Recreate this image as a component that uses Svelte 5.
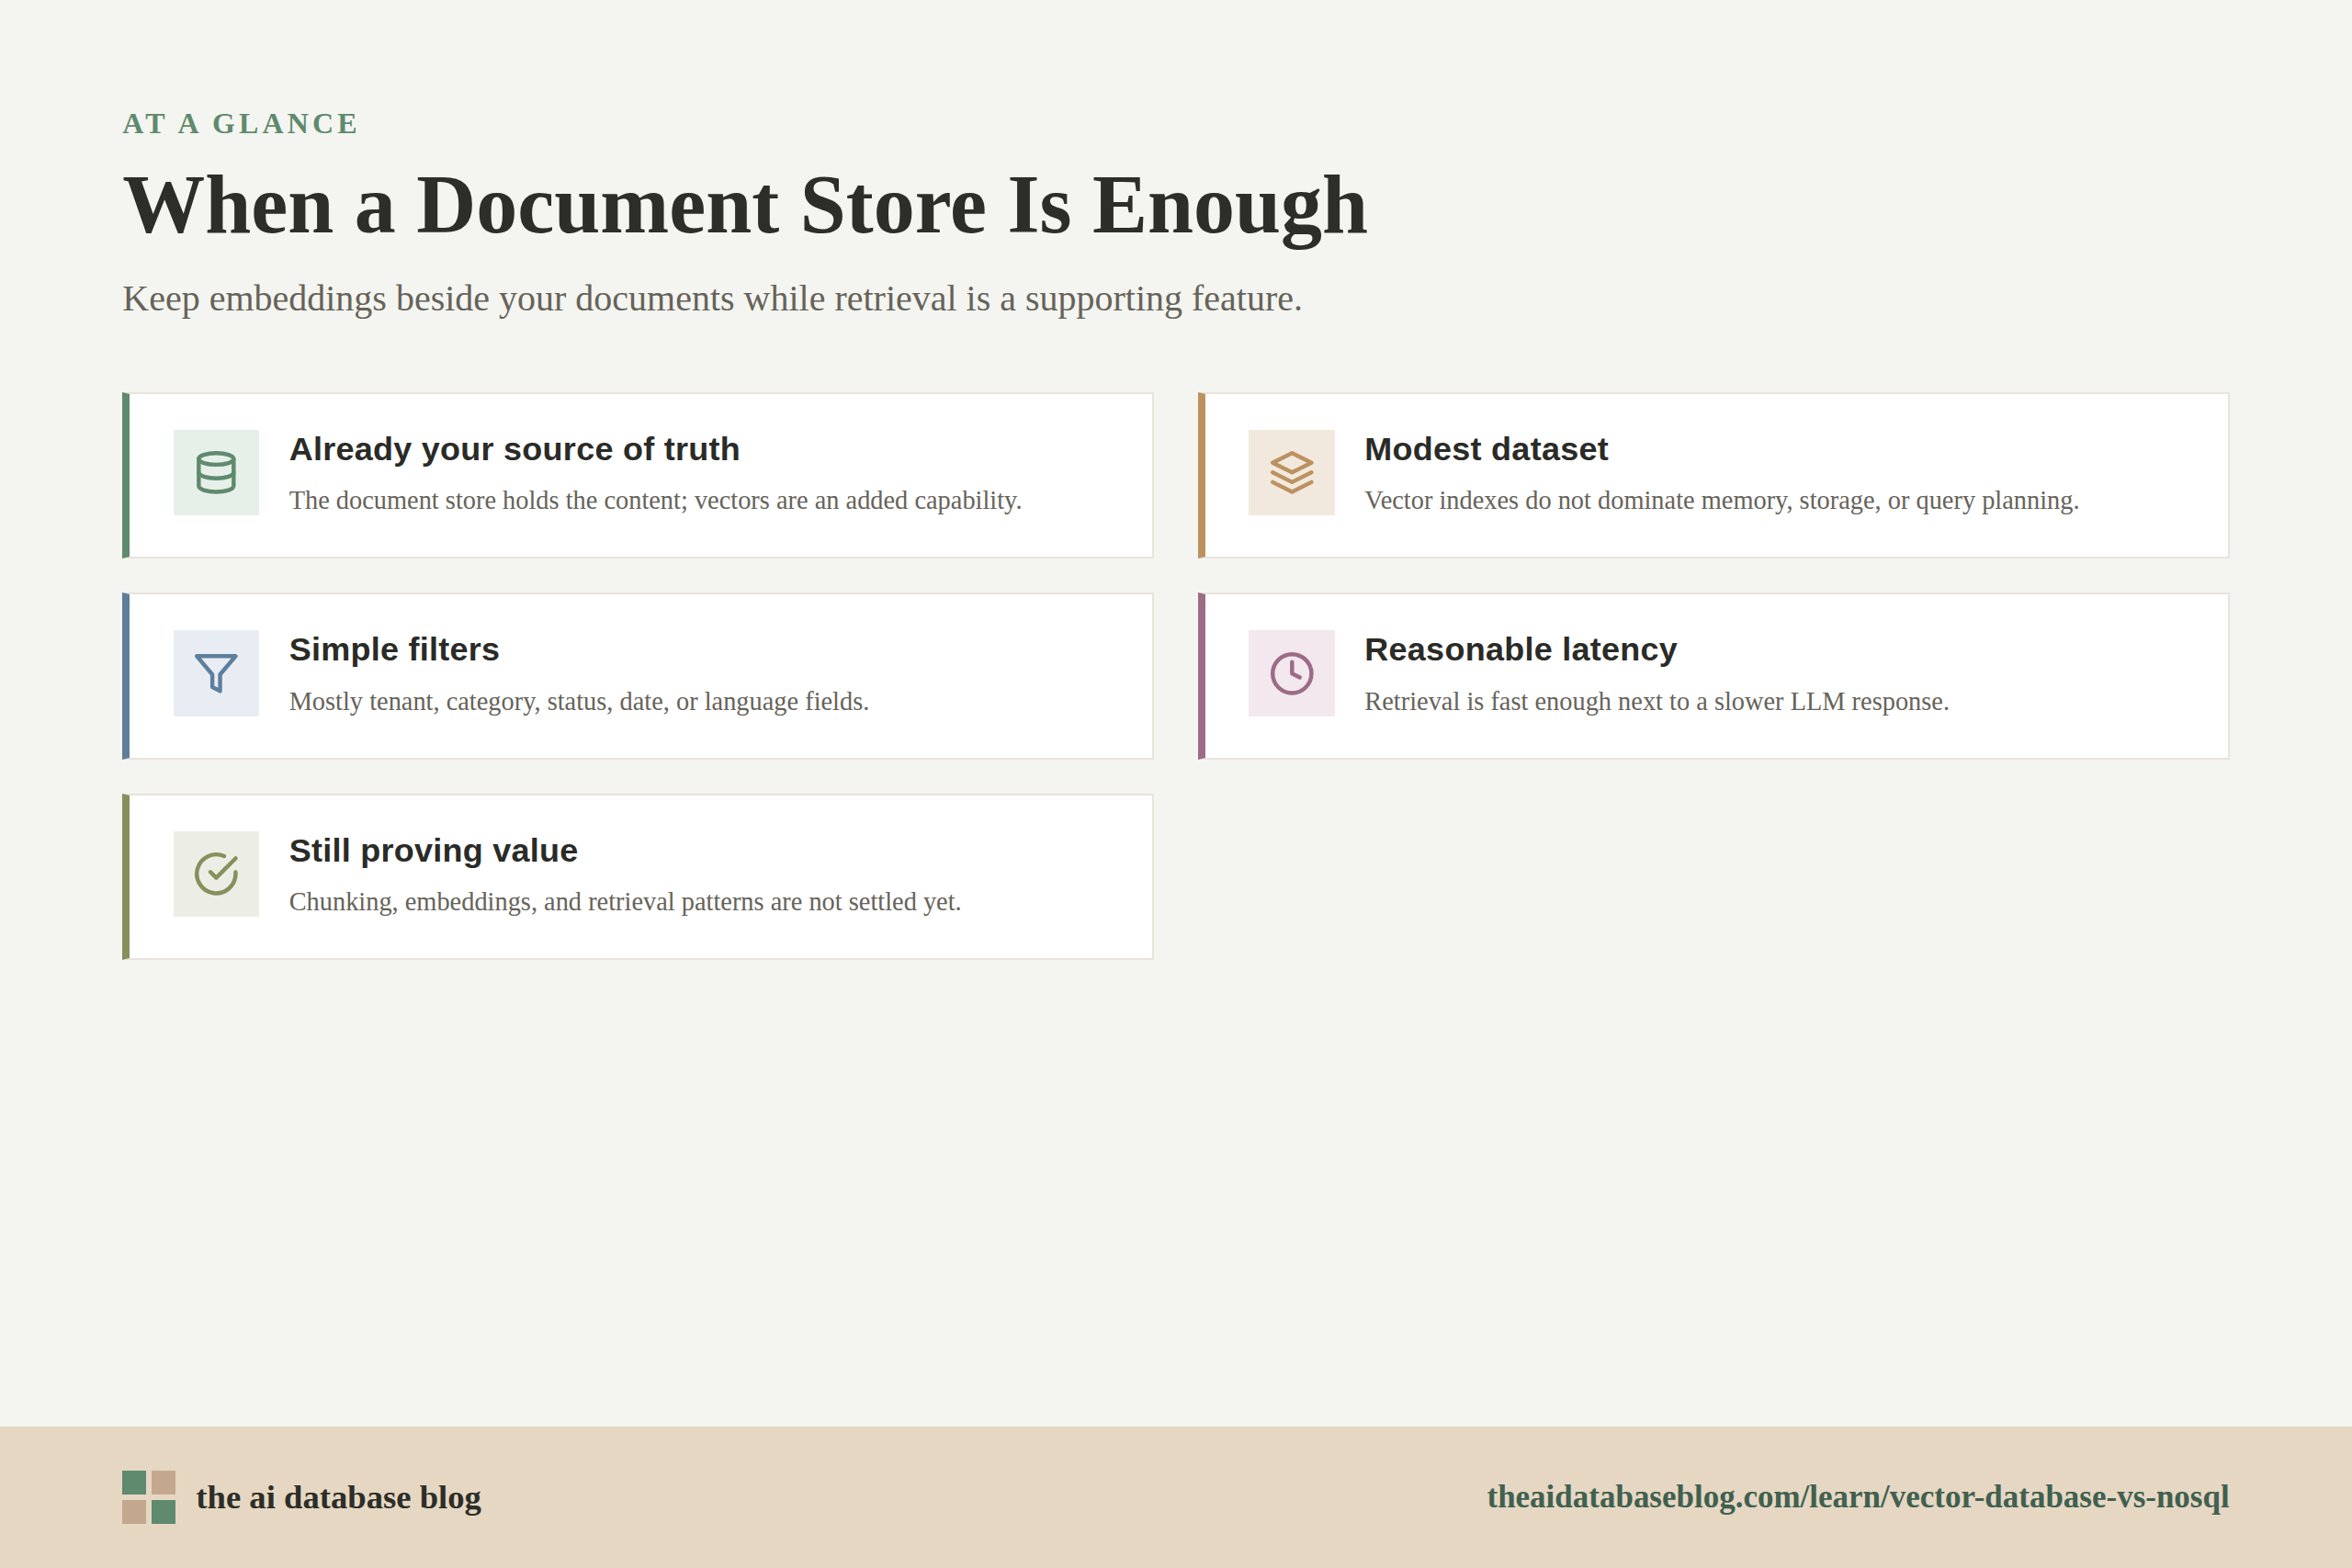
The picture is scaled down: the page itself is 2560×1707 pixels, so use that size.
<script>
  const cards = [
    { title: 'Already your source of truth', text: 'The document store holds the content; vectors are an added capability.', tone: 'green', icon: 'db' },
    { title: 'Modest dataset', text: 'Vector indexes do not dominate memory, storage, or query planning.', tone: 'tan', icon: 'layers' },
    { title: 'Simple filters', text: 'Mostly tenant, category, status, date, or language fields.', tone: 'blue', icon: 'filter' },
    { title: 'Reasonable latency', text: 'Retrieval is fast enough next to a slower LLM response.', tone: 'mauve', icon: 'clock' },
    { title: 'Still proving value', text: 'Chunking, embeddings, and retrieval patterns are not settled yet.', tone: 'olive', icon: 'check' }
  ];
</script>

<div class="page">
  <main class="main">
    <div class="eyebrow">AT A GLANCE</div>
    <h1>When a Document Store Is Enough</h1>
    <p class="sub">Keep embeddings beside your documents while retrieval is a supporting feature.</p>
    <div class="grid">
      {#each cards as c}
        <article class="card {c.tone}">
          <div class="icon">
            <svg viewBox="0 0 24 24" width="38" height="38" fill="none" stroke="currentColor" stroke-width="2.1" stroke-linecap="round" stroke-linejoin="round">
              {#if c.icon === 'db'}
                <ellipse cx="12" cy="5" rx="9" ry="3" />
                <path d="M3 5v14c0 1.66 4 3 9 3s9-1.34 9-3V5" />
                <path d="M3 12c0 1.66 4 3 9 3s9-1.34 9-3" />
              {:else if c.icon === 'layers'}
                <path d="M12 2 2 7l10 5 10-5-10-5z" />
                <path d="m2 17 10 5 10-5" />
                <path d="m2 12 10 5 10-5" />
              {:else if c.icon === 'filter'}
                <path d="M22 3H2l8 9.46V19l4 2v-8.54L22 3z" />
              {:else if c.icon === 'clock'}
                <circle cx="12" cy="12" r="10" />
                <path d="M12 6v6l4 2" />
              {:else}
                <path d="M22 11.08V12a10 10 0 1 1-5.93-9.14" />
                <path d="M22 4 12 14.01l-3-3" />
              {/if}
            </svg>
          </div>
          <div class="copy">
            <h2>{c.title}</h2>
            <p>{c.text}</p>
          </div>
        </article>
      {/each}
    </div>
  </main>
  <footer class="footer">
    <div class="brand">
      <div class="logo"><i class="g"></i><i class="t"></i><i class="t"></i><i class="g"></i></div>
      <span>the ai database blog</span>
    </div>
    <div class="url">theaidatabaseblog.com/learn/vector-database-vs-nosql</div>
  </footer>
</div>

<style>
  :global(body) { margin: 0; background: #f4f5f0; }
  .page {
    zoom: 1.33333;
    width: 1920px;
    height: 1280px;
    display: flex;
    flex-direction: column;
    background: #f4f5f0;
    font-family: "Liberation Serif", serif;
    color: #2d2e28;
  }
  .main { flex: 1; padding: 87px 100px 0; box-sizing: border-box; }
  .eyebrow { font-size: 24px; line-height: 28px; font-weight: 700; letter-spacing: 3.1px; color: #5f8a6e; }
  h1 { margin: 13.5px 0 0; font-size: 67.5px; line-height: 78px; font-weight: 700; }
  .sub { margin: 19.5px 0 0; font-size: 30px; line-height: 36px; color: #66635a; }
  .grid { margin-top: 58px; display: grid; grid-template-columns: 1fr 1fr; column-gap: 36px; row-gap: 28px; }
  .card {
    box-sizing: border-box;
    height: 136px;
    display: flex;
    gap: 24.4px;
    padding: 29.3px 34px 0 35.6px;
    background: #fff;
    border: 1.6px solid #e8e4dc;
    border-left: 6.1px solid var(--c);
    --c: #5f8a6e;
    --b: #e6efe8;
  }
  .tan { --c: #bc9160; --b: #f2e9de; }
  .blue { --c: #5e7f9c; --b: #e8edf3; }
  .mauve { --c: #9c6b85; --b: #f2e8ee; }
  .olive { --c: #85905c; --b: #ecede4; }
  .icon { flex: none; width: 70px; height: 70px; display: flex; align-items: center; justify-content: center; background: var(--b); color: var(--c); }
  .copy { min-width: 0; }
  h2 { margin: 0; font-family: "Liberation Sans", sans-serif; font-size: 27px; line-height: 32px; font-weight: 700; letter-spacing: .2px; color: #2a2b27; }
  .copy p { margin: 11px 0 0; font-size: 21.3px; line-height: 30px; color: #66635a; }
  .footer { flex: none; height: 115px; display: flex; align-items: center; justify-content: space-between; padding: 0 100px; background: #e6d7c3; }
  .brand { display: flex; align-items: center; gap: 17px; font-size: 27.5px; font-weight: 700; }
  .logo { display: grid; grid-template-columns: 19px 19px; grid-auto-rows: 19px; gap: 5px; }
  .logo .g { background: #5f8a6e; }
  .logo .t { background: #c4a88e; }
  .url { font-size: 26.25px; font-weight: 700; color: #41604f; }
</style>
